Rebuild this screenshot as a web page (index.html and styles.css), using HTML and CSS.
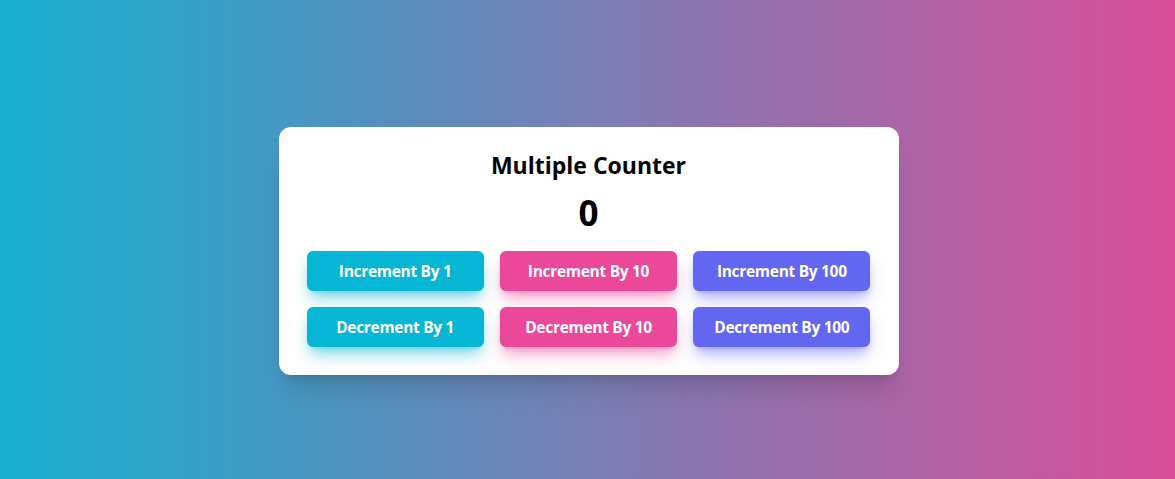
FILE: index.html
```html
<!DOCTYPE html>
<html>
<head>
<meta charset="utf-8">
<link rel="stylesheet" href="styles.css">
</head>
<body>
<main class="page">
  <section class="card">
    <h1 class="title">Multiple Counter</h1>
    <div class="count">0</div>
    <div class="grid">
      <button class="btn cyan">Increment By 1</button>
      <button class="btn pink">Increment By 10</button>
      <button class="btn indigo">Increment By 100</button>
      <button class="btn cyan">Decrement By 1</button>
      <button class="btn pink">Decrement By 10</button>
      <button class="btn indigo">Decrement By 100</button>
    </div>
  </section>
</main>
</body>
</html>
```
FILE: styles.css
```css
* { box-sizing: border-box; }
html, body { margin: 0; padding: 0; }
body {
  font-family: "Open Sans", "Noto Sans", sans-serif;
}
.page {
  width: 100%;
  height: 479px;
  padding: 22px 0 0 2px;
  background: linear-gradient(to right, #16b0d0, #da4e9a);
  display: flex;
  align-items: center;
  justify-content: center;
}
.card {
  width: 620px;
  background: #fff;
  border-radius: 12px;
  padding: 22px 28px 28px;
  box-shadow: 0 20px 25px -5px rgba(0,0,0,0.12), 0 8px 10px -6px rgba(0,0,0,0.12);
  text-align: center;
}
.title {
  margin: 0;
  font-size: 23px;
  line-height: 32px;
  font-weight: 700;
  color: #000;
}
.count {
  margin-top: 12px;
  font-size: 35px;
  line-height: 40px;
  font-weight: 700;
  color: #000;
}
.grid {
  margin-top: 18px;
  display: grid;
  grid-template-columns: repeat(3, 1fr);
  gap: 16px;
}
.btn {
  height: 40px;
  border: 0;
  border-radius: 6px;
  color: #fff;
  font-family: inherit;
  font-size: 15.5px;
  font-weight: 700;
  letter-spacing: -0.3px;
  padding: 0;
}
.cyan { background: #06b6d4; box-shadow: 0 10px 15px -3px rgba(6,182,212,0.5), 0 4px 6px -4px rgba(6,182,212,0.5); }
.pink { background: #ec4899; box-shadow: 0 10px 15px -3px rgba(236,72,153,0.5), 0 4px 6px -4px rgba(236,72,153,0.5); }
.indigo { background: #6366f1; box-shadow: 0 10px 15px -3px rgba(99,102,241,0.5), 0 4px 6px -4px rgba(99,102,241,0.5); }
```
